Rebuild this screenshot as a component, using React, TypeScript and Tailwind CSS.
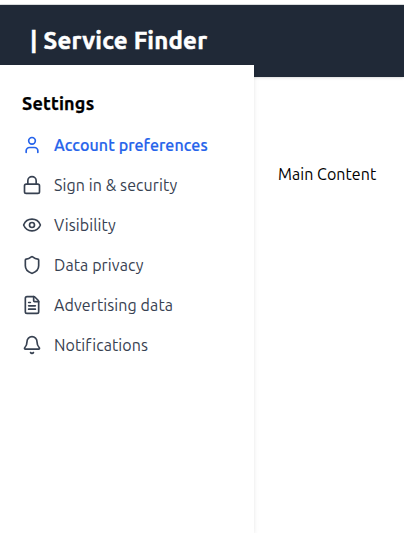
import { Bell, Eye, FileText, Lock, Shield, User } from "lucide-react";

const items = [
  { label: "Account preferences", icon: User, active: true },
  { label: "Sign in & security", icon: Lock },
  { label: "Visibility", icon: Eye },
  { label: "Data privacy", icon: Shield },
  { label: "Advertising data", icon: FileText },
  { label: "Notifications", icon: Bell },
];

export default function App() {
  return (
    <div className="flex h-[533px] w-[404px] flex-col overflow-hidden bg-white font-['Ubuntu','Noto_Sans',sans-serif] text-black">
      <div className="h-[5px] shrink-0 border-b border-[#dcdfe0] bg-white" />
      <header className="flex h-[72px] shrink-0 items-center bg-[#202937] pl-[30px] shadow-sm">
        <h1 className="whitespace-nowrap text-2xl font-bold tracking-[0.22px] text-white [-webkit-text-stroke:0.5px]">| Service Finder</h1>
      </header>
      <div className="flex min-h-0 flex-1">
        <aside className="relative -mt-3 w-[254px] shrink-0 bg-white px-[22px] pt-6 shadow-md">
          <h2 className="mb-4 text-lg leading-7 font-bold tracking-[0.2px] [-webkit-text-stroke:0.25px]">Settings</h2>
          <nav>
            <ul className="flex flex-col gap-4">
              {items.map(({ label, icon: Icon, active }) => (
                <li
                  key={label}
                  className={`flex items-center gap-3 ${active ? "font-medium text-[#2563eb] [-webkit-text-stroke:0.2px]" : "text-[#374151]"}`}
                >
                  <Icon size={20} strokeWidth={2} />
                  <span className="whitespace-nowrap tracking-[0.1px]">{label}</span>
                </li>
              ))}
            </ul>
          </nav>
        </aside>
        <main className="min-w-0 flex-1 px-6 pt-[85px]">
          <p className="whitespace-nowrap tracking-[0.05px]">Main Content</p>
        </main>
      </div>
    </div>
  );
}
